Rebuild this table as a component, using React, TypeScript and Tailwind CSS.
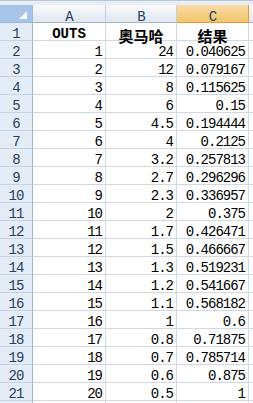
import React from "react";

const rows: [string, string, string][] = [
  ["1", "24", "0.040625"],
  ["2", "12", "0.079167"],
  ["3", "8", "0.115625"],
  ["4", "6", "0.15"],
  ["5", "4.5", "0.194444"],
  ["6", "4", "0.2125"],
  ["7", "3.2", "0.257813"],
  ["8", "2.7", "0.296296"],
  ["9", "2.3", "0.336957"],
  ["10", "2", "0.375"],
  ["11", "1.7", "0.426471"],
  ["12", "1.5", "0.466667"],
  ["13", "1.3", "0.519231"],
  ["14", "1.2", "0.541667"],
  ["15", "1.1", "0.568182"],
  ["16", "1", "0.6"],
  ["17", "0.8", "0.71875"],
  ["18", "0.7", "0.785714"],
  ["19", "0.6", "0.875"],
  ["20", "0.5", "1"],
];

const mono = "font-['Liberation_Mono',monospace] text-[14px] tracking-[-1px]";
const grid = "grid grid-cols-[33px_73px_71px_72px_1fr]";
const rowHead =
  "h-[18px] bg-[#e4ecf7] border-r border-b border-r-[#9eb6ce] border-b-[#c5d3e3] text-center leading-[23px] text-[#27415f] " +
  mono;
const cell =
  "h-[18px] border-r border-b border-[#d0d7e5] text-right pr-[3px] leading-[23px] text-black overflow-visible whitespace-nowrap " +
  mono;
const cjk =
  "h-[18px] flex items-end justify-center border-r border-b border-[#d0d7e5] font-['Noto_Sans_CJK_SC',sans-serif] font-bold text-[15px] text-black";
const colHead =
  "flex items-end justify-center border-r border-b text-[#27415f] " + mono;

export default function App() {
  return (
    <div className="w-[253px] h-[403px] overflow-hidden bg-white">
      <div className="h-[5px] bg-[#e9eef5] border-t border-[#b7c6d9]" />
      <div className={grid + " h-[18px]"}>
        <div className="relative bg-[#a9c4e9] border-r border-b border-[#9eb6ce]">
          <svg className="absolute left-[19px] top-[6px]" width="8" height="8" viewBox="0 0 8 8">
            <defs>
              <linearGradient id="tri" x1="0" y1="0" x2="1" y2="1">
                <stop offset="0" stopColor="#eef3fa" />
                <stop offset="1" stopColor="#ffffff" />
              </linearGradient>
            </defs>
            <polygon points="8,0 8,8 0,8" fill="url(#tri)" />
          </svg>
        </div>
        {["A", "B"].map((l) => (
          <div
            key={l}
            className={
              colHead +
              " bg-gradient-to-b from-[#f9fbfd] to-[#dfe6ef] border-r-[#c5d1df] border-b-[#9eb6ce]"
            }
          >
            <span className="leading-[10px]">{l}</span>
          </div>
        ))}
        <div
          className={
            colHead + " bg-gradient-to-b from-[#f9dba6] to-[#f2c56a] border-[#f29436]"
          }
        >
          <span className="leading-[10px]">C</span>
        </div>
        <div className="bg-gradient-to-b from-[#f9fbfd] to-[#dfe6ef] border-b border-[#9eb6ce]" />
      </div>

      <div className={grid}>
        <div className={rowHead}>1</div>
        <div className="h-[18px] border-r border-b border-[#d0d7e5] text-center leading-[22px] font-['Liberation_Mono',monospace] font-bold text-[14px] text-black">
          OUTS
        </div>
        <div className={cjk}>
          <span className="leading-[9px]">奥马哈</span>
        </div>
        <div className={cjk}>
          <span className="leading-[9px]">结果</span>
        </div>
        <div className="h-[18px] border-b border-[#d0d7e5]" />

        {rows.map((r, i) => (
          <React.Fragment key={i}>
            <div className={rowHead}>{i + 2}</div>
            <div className={cell}>{r[0]}</div>
            <div className={cell}>{r[1]}</div>
            <div className={cell + " pr-[1px]"}>{r[2]}</div>
            <div className="h-[18px] border-b border-[#d0d7e5]" />
          </React.Fragment>
        ))}
        <div className={rowHead}></div>
        <div className={cell}></div>
        <div className={cell}></div>
        <div className={cell}></div>
        <div className="h-[18px] border-b border-[#d0d7e5]" />
      </div>
    </div>
  );
}
